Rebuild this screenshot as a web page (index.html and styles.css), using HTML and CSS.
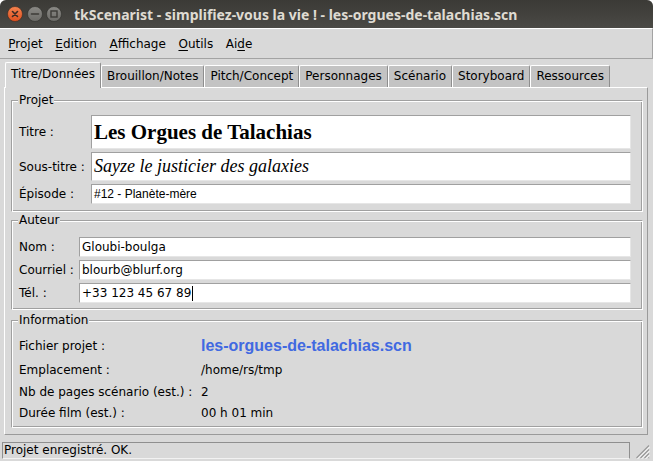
FILE: index.html
```
<!DOCTYPE html>
<html lang="fr">
<head>
<meta charset="utf-8">
<title>tkScenarist</title>
<link rel="stylesheet" href="styles.css">
</head>
<body>
<div class="window">
  <div class="titlebar">
    <div class="wbtns">
      <svg class="wbtn" width="16" height="16" viewBox="0 0 16 16">
        <defs>
          <linearGradient id="gclose" x1="0" y1="0" x2="0" y2="1">
            <stop offset="0" stop-color="#f4834f"/>
            <stop offset="1" stop-color="#e0501f"/>
          </linearGradient>
          <linearGradient id="ggrey" x1="0" y1="0" x2="0" y2="1">
            <stop offset="0" stop-color="#8a8985"/>
            <stop offset="1" stop-color="#6c6b67"/>
          </linearGradient>
        </defs>
        <circle cx="8" cy="8" r="7.5" fill="url(#gclose)" stroke="#3a2a22" stroke-width="0.6"/>
        <path d="M5.5 5.5 L10.5 10.5 M10.5 5.5 L5.5 10.5" stroke="#3b2a24" stroke-width="1.6" stroke-linecap="round"/>
      </svg>
      <svg class="wbtn" width="16" height="16" viewBox="0 0 16 16">
        <circle cx="8" cy="8" r="7.5" fill="url(#ggrey)" stroke="#2e2d2a" stroke-width="0.6"/>
        <path d="M4.5 8 L11.5 8" stroke="#3c3b37" stroke-width="1.6" stroke-linecap="round"/>
      </svg>
      <svg class="wbtn" width="16" height="16" viewBox="0 0 16 16">
        <circle cx="8" cy="8" r="7.5" fill="url(#ggrey)" stroke="#2e2d2a" stroke-width="0.6"/>
        <rect x="5" y="5" width="6" height="6" fill="none" stroke="#3c3b37" stroke-width="1.4"/>
      </svg>
    </div>
    <div class="wtitle">tkScenarist - simplifiez-vous la vie ! - les-orgues-de-talachias.scn</div>
  </div>

  <div class="menubar">
    <span class="mi"><u>P</u>rojet</span>
    <span class="mi"><u>E</u>dition</span>
    <span class="mi"><u>A</u>ffichage</span>
    <span class="mi"><u>O</u>utils</span>
    <span class="mi">Ai<u>d</u>e</span>
  </div>

  <div class="notebook">
    <div class="tabs">
      <div class="tab selected">Titre/Données</div>
      <div class="tab">Brouillon/Notes</div>
      <div class="tab">Pitch/Concept</div>
      <div class="tab">Personnages</div>
      <div class="tab">Scénario</div>
      <div class="tab">Storyboard</div>
      <div class="tab">Ressources</div>
    </div>
    <div class="pane">
      <div class="lf lf-projet">
        <span class="lf-label">Projet</span>
        <div class="form form-projet">
          <div class="lbl">Titre :</div>
          <div class="entry e-titre">Les Orgues de Talachias</div>
          <div class="lbl">Sous-titre :</div>
          <div class="entry e-sous">Sayze le justicier des galaxies</div>
          <div class="lbl">Épisode :</div>
          <div class="entry e-ep">#12 - Planète-mère</div>
        </div>
      </div>

      <div class="lf lf-auteur">
        <span class="lf-label">Auteur</span>
        <div class="form form-auteur">
          <div class="lbl">Nom :</div>
          <div class="entry">Gloubi-boulga</div>
          <div class="lbl">Courriel :</div>
          <div class="entry">blourb@blurf.org</div>
          <div class="lbl">Tél. :</div>
          <div class="entry">+33 123 45 67 89<span class="caret"></span></div>
        </div>
      </div>

      <div class="lf lf-info">
        <span class="lf-label">Information</span>
        <div class="form form-info">
          <div class="lbl">Fichier projet :</div>
          <div class="val file">les-orgues-de-talachias.scn</div>
          <div class="lbl">Emplacement :</div>
          <div class="val">/home/rs/tmp</div>
          <div class="lbl">Nb de pages scénario (est.) :</div>
          <div class="val">2</div>
          <div class="lbl">Durée film (est.) :</div>
          <div class="val">00 h 01 min</div>
        </div>
      </div>
    </div>
  </div>

  <div class="statusbar">
    <div class="status">Projet enregistré. OK.</div>
    <svg class="grip" width="16" height="16" viewBox="0 0 16 16">
      <path d="M15 2.5 L2.5 15 M15 6.5 L6.5 15 M15 10.5 L10.5 15 M15 14.5 L14.5 15" stroke="#9a9a9a" stroke-width="1.2"/>
      <path d="M16 3.5 L3.5 16 M16 7.5 L7.5 16 M16 11.5 L11.5 16" stroke="#ffffff" stroke-width="1"/>
    </svg>
  </div>
</div>
</body>
</html>
```

FILE: styles.css
```
html, body {
  margin: 0;
  padding: 0;
  background: #ffffff;
}

body {
  width: 653px;
  height: 461px;
  overflow: hidden;
  font-family: "DejaVu Sans", sans-serif;
  font-size: 12px;
  color: #000;
}

.window {
  width: 653px;
  height: 461px;
  background: #d9d9d9;
  border-radius: 6px 6px 0 0;
  overflow: hidden;
  display: flex;
  flex-direction: column;
}

/* ---------- title bar ---------- */
.titlebar {
  height: 28px;
  flex: none;
  background: linear-gradient(#3b3a36, #4a4945);
  display: flex;
  align-items: center;
}

.wbtns {
  display: flex;
  gap: 3.5px;
  padding-left: 7px;
}

.wbtn {
  display: block;
}

.wtitle {
  margin-left: 12px;
  font-family: "Noto Sans", "DejaVu Sans", sans-serif;
  font-weight: bold;
  font-size: 14px;
  color: #dfdbd2;
  white-space: nowrap;
}

/* ---------- menu bar ---------- */
.menubar {
  height: 29px;
  flex: none;
  border-top: 1px solid #ffffff;
  border-bottom: 1px solid #a3a3a3;
  border-right: 1px solid #a3a3a3;
  display: flex;
  align-items: center;
  padding-left: 2px;
}

.mi {
  padding: 0 6.3px;
}

.mi u {
  text-decoration-thickness: 1px;
  text-underline-offset: 2px;
}

/* ---------- notebook ---------- */
.notebook {
  flex: none;
  padding: 3px 5px 0 4px;
}

.tabs {
  display: flex;
  align-items: flex-end;
  height: 25px;
  padding-left: 1px;
}

.tab {
  height: 21px;
  line-height: 20px;
  padding: 0 5px;
  background: #c3c3c3;
  border-top: 1px solid #ffffff;
  border-left: 1px solid #ffffff;
  border-right: 1px solid #8e8e8e;
  border-radius: 2px 2px 0 0;
  white-space: nowrap;
}

.tab.selected {
  height: 25px;
  line-height: 23px;
  background: #d9d9d9;
  margin-bottom: -1px;
  position: relative;
  z-index: 1;
}

.pane {
  border: 1px solid;
  border-color: #ffffff #9a9a9a #9a9a9a #ffffff;
  padding: 12px 4px 6px 6px;
  display: flex;
  flex-direction: column;
}

/* ---------- label frames ---------- */
.lf {
  position: relative;
  border: 1px solid;
  border-color: #a0a0a0 #ffffff #ffffff #a0a0a0;
  box-shadow: inset 1px 1px 0 #ffffff, inset -1px -1px 0 #a0a0a0;
}

.lf-label {
  position: absolute;
  left: 6px;
  top: -8px;
  padding: 0 1px;
  line-height: 14px;
  background: #d9d9d9;
}

.lf-projet {
  padding: 14px 11px 7px 7px;
}

.lf-auteur {
  margin-top: 8px;
  padding: 16px 11px 6px 7px;
}

.lf-info {
  margin-top: 10px;
  padding: 12px 11px 4px 7px;
}

.form {
  display: grid;
  align-items: stretch;
}

.form-projet {
  grid-template-columns: 72px 1fr;
  grid-template-rows: 34px 29px 20px;
  row-gap: 3px;
}

.form-auteur {
  grid-template-columns: 60px 1fr;
  grid-template-rows: 20px 20px 20px;
  row-gap: 3px;
}

.form-info {
  grid-template-columns: 182px 1fr;
  grid-template-rows: 26px 22px 21px 21px;
}

.lbl, .val {
  display: flex;
  align-items: center;
  white-space: nowrap;
}

.entry {
  display: flex;
  align-items: center;
  background: #ffffff;
  border: 1px solid;
  border-color: #a0a0a0 #e6e6e6 #e6e6e6 #a0a0a0;
  padding-left: 2px;
  overflow: hidden;
  white-space: nowrap;
}

.e-titre {
  font-family: "Liberation Serif", "DejaVu Serif", serif;
  font-weight: bold;
  font-size: 21px;
}

.e-sous {
  font-family: "Liberation Serif", "DejaVu Serif", serif;
  font-style: italic;
  font-size: 18px;
}

.e-ep {
  font-family: "Liberation Sans", Arial, sans-serif;
  font-size: 12px;
}

.caret {
  display: inline-block;
  width: 0;
  height: 15px;
  border-left: 1px solid #000;
  margin-left: 1px;
}

.val.file {
  font-family: "Liberation Sans", Arial, sans-serif;
  font-weight: bold;
  font-size: 16px;
  color: #4169e1;
}

/* ---------- status bar ---------- */
.statusbar {
  flex: none;
  margin-top: 7px;
  height: 17px;
  display: flex;
  align-items: stretch;
  padding-left: 2px;
}

.status {
  width: 628px;
  box-sizing: border-box;
  border: 1px solid;
  border-color: #8f8f8f #8f8f8f #f2f2f2 #8f8f8f;
  padding-left: 1px;
  line-height: 15px;
  white-space: nowrap;
}

.grip {
  display: block;
  margin-left: 4px;
  margin-top: 1px;
}
```
